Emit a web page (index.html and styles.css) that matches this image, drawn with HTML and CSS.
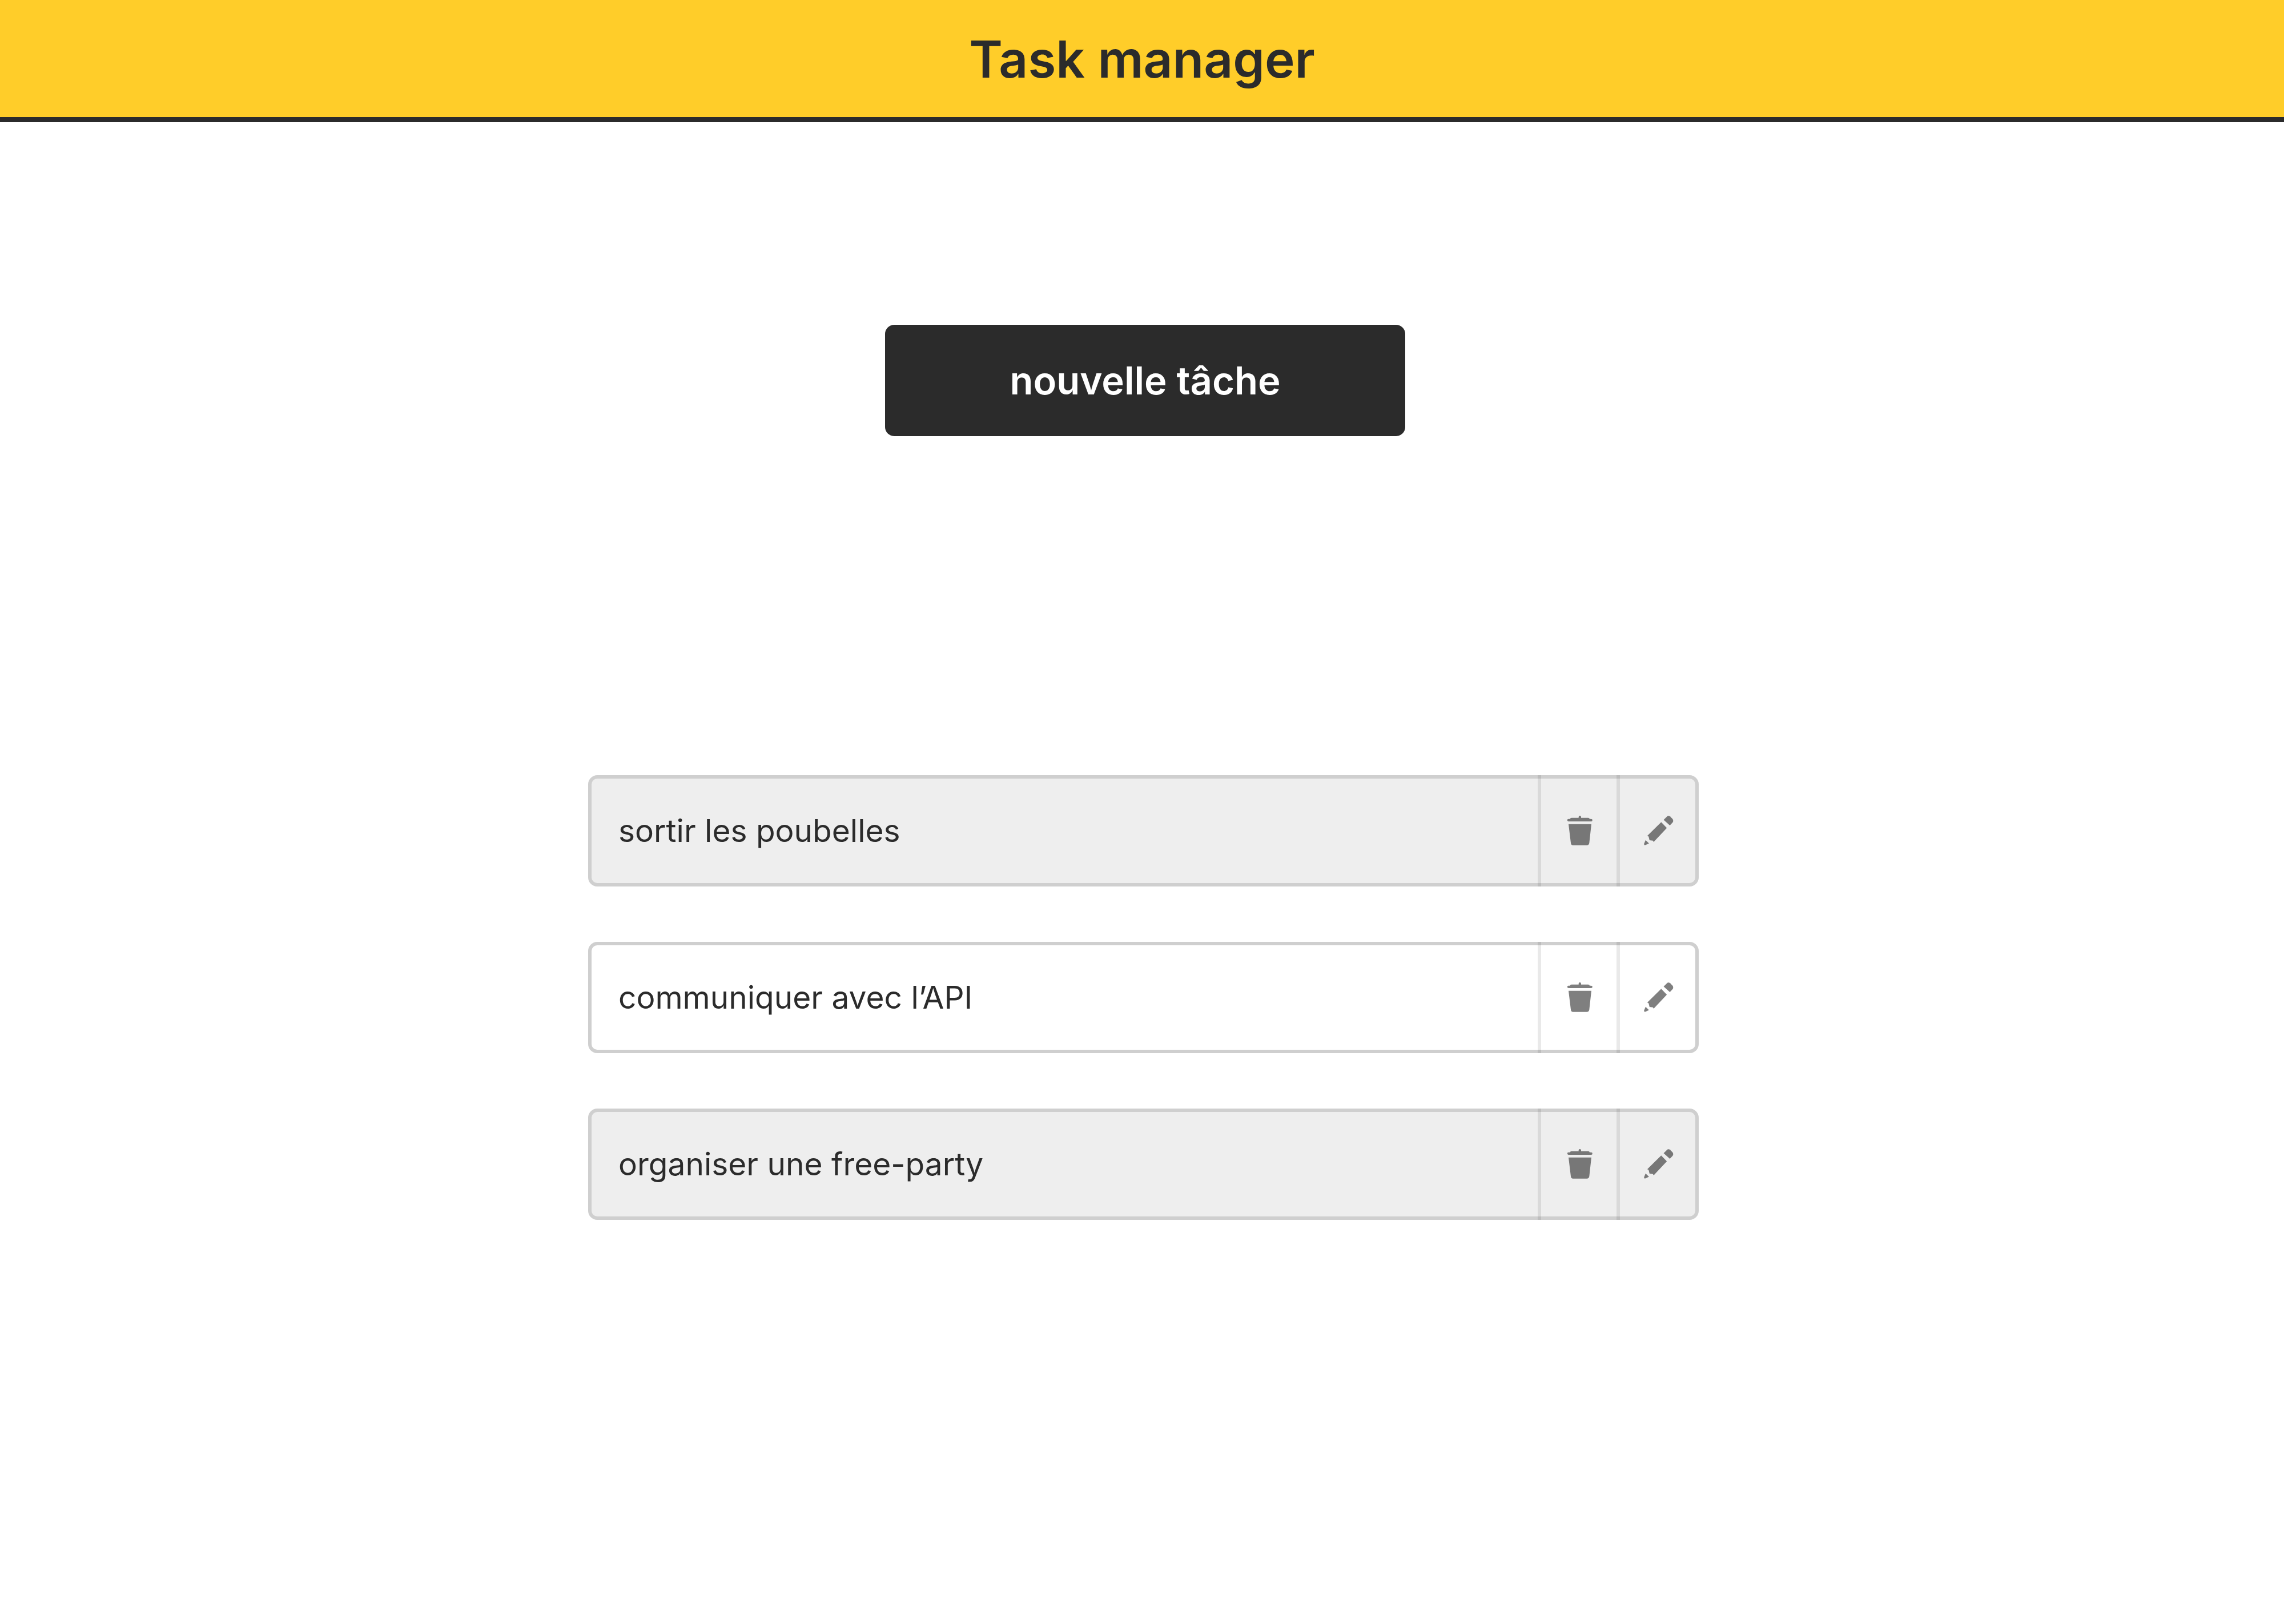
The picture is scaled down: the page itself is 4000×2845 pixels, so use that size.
FILE: index.html
```html
<!DOCTYPE html>
<html lang="fr">
<head>
<meta charset="utf-8">
<meta name="viewport" content="width=device-width, initial-scale=1">
<title>Task manager</title>
<link rel="stylesheet" href="styles.css">
</head>
<body>
<svg class="sprite" aria-hidden="true">
  <symbol id="trash" viewBox="78 54 132 156">
    <path d="M84 71H92Q93 65 100 65H137V61Q137 54 143.500 54Q150 54 150 61V65H187Q194 65 195 71H203A6.500 6.500 0 0 1 203 84H84A6.500 6.500 0 0 1 84 71Z"/>
    <path d="M84 98H204L193 197Q191 209 180 209H108Q97 209 96 197Z"/>
  </symbol>
  <symbol id="pencil" viewBox="603 239 156 158">
    <path d="M707 261L724 244Q732 236 741 243L754 256Q761 265 755 275L740 291Z"/>
    <path d="M694 273L724 304L654 379L650 372L632 370L627 350L620 346Z"/>
    <path d="M611 369L629 386L611 395Q602 398 603 388Z"/>
  </symbol>
</svg>
<header class="header">
  <h1 class="title">Task manager</h1>
</header>
<main class="main">
  <div class="toolbar">
    <button class="new-task" type="button">nouvelle tâche</button>
  </div>
  <ul class="tasks">
    <li class="task">
      <span class="label">sortir les poubelles</span>
      <button class="action" type="button" aria-label="Supprimer"><svg class="icon-trash"><use href="#trash"/></svg></button>
      <button class="action" type="button" aria-label="Modifier"><svg class="icon-pencil"><use href="#pencil"/></svg></button>
    </li>
    <li class="task">
      <span class="label">communiquer avec l’API</span>
      <button class="action" type="button" aria-label="Supprimer"><svg class="icon-trash"><use href="#trash"/></svg></button>
      <button class="action" type="button" aria-label="Modifier"><svg class="icon-pencil"><use href="#pencil"/></svg></button>
    </li>
    <li class="task">
      <span class="label">organiser une free-party</span>
      <button class="action" type="button" aria-label="Supprimer"><svg class="icon-trash"><use href="#trash"/></svg></button>
      <button class="action" type="button" aria-label="Modifier"><svg class="icon-pencil"><use href="#pencil"/></svg></button>
    </li>
  </ul>
</main>
</body>
</html>
```

FILE: styles.css
```css
* {
  box-sizing: border-box;
}

body {
  margin: 0;
  background: #fff;
  color: #2b2b2b;
  font-family: Inter, "Liberation Sans", sans-serif;
}

.sprite {
  display: none;
}

.header {
  padding: 49px 32px 46px;
  border-bottom: 9px solid #2b2b2b;
  background: #ffcd29;
  text-align: center;
}

.title {
  margin: 0;
  font-size: 89px;
  font-weight: 600;
  line-height: 110px;
}

.main {
  display: flex;
  flex-direction: column;
  gap: 594px;
  padding: 355px 0 96px;
}

.toolbar {
  display: flex;
  justify-content: center;
  padding-left: 11px;
}

.new-task {
  width: 100%;
  max-width: 911px;
  padding: 56px 32px;
  border: 0;
  border-radius: 16px;
  background: #2b2b2b;
  color: #fff;
  font-family: inherit;
  font-size: 67px;
  font-weight: 600;
  line-height: 83px;
}

.tasks {
  display: flex;
  flex-direction: column;
  align-items: center;
  gap: 97px;
  margin: 0;
  padding: 0 0 0 5px;
  list-style: none;
}

.task {
  display: flex;
  width: 100%;
  max-width: 1945px;
  border: 6px solid #cfcfcf;
  border-radius: 16px;
  background: #fff;
}

.task:nth-child(odd) {
  background: #eee;
}

.label {
  flex: 1;
  padding: 56px 47px;
  font-size: 55px;
  font-weight: 400;
  line-height: 71px;
}

.action {
  display: flex;
  flex: none;
  align-items: center;
  justify-content: center;
  width: 138px;
  margin: -6px 0;
  padding: 0 0 2px 4px;
  border: 0;
  border-left: 6px solid rgba(0, 0, 0, 0.085);
  background: none;
  color: rgba(0, 0, 0, 0.5);
}

.icon-trash {
  width: 44px;
  height: 52px;
  fill: currentColor;
}

.icon-pencil {
  width: 52px;
  height: 52px;
  fill: currentColor;
}
```
